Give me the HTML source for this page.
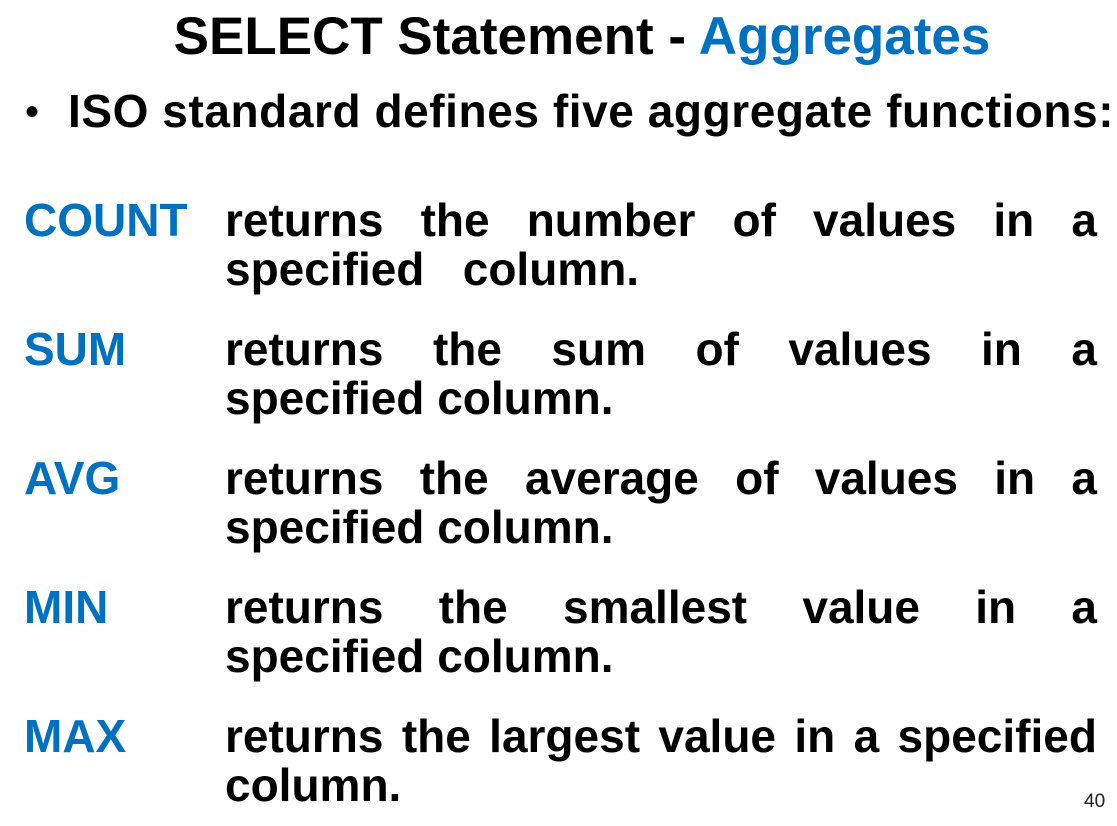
<!DOCTYPE html>
<html><head><meta charset="utf-8"><style>
html,body{margin:0;padding:0;background:#fff;}
body{width:1117px;height:826px;position:relative;overflow:hidden;font-family:"Liberation Sans",Arial,sans-serif;font-weight:bold;color:#000;}
.l{position:absolute;line-height:1;white-space:nowrap;font-size:46px;}
.b{color:#0070c0;}
.j{position:absolute;left:225px;width:872px;display:flex;justify-content:space-between;line-height:1;font-size:46px;white-space:nowrap;}
</style></head><body>
<div class="l" style="left:0;width:1164px;text-align:center;top:10px;font-size:53px;">SELECT Statement - <span class="b">Aggregates</span></div>
<div class="l" style="left:25px;top:92px;font-size:40px;font-weight:normal;">•</div>
<div class="l" style="left:68px;top:88px;letter-spacing:0.57px;">ISO standard defines five aggregate functions:</div>

<div class="l b" style="left:24px;top:197px;">COUNT</div>
<div class="j" style="top:197px;"><span>returns</span><span>the</span><span>number</span><span>of</span><span>values</span><span>in</span><span>a</span></div>
<div class="l" style="left:225px;top:246px;">specified&nbsp;&nbsp; column.</div>

<div class="l b" style="left:24px;top:326px;">SUM</div>
<div class="j" style="top:326px;"><span>returns</span><span>the</span><span>sum</span><span>of</span><span>values</span><span>in</span><span>a</span></div>
<div class="l" style="left:225px;top:375px;">specified column.</div>

<div class="l b" style="left:24px;top:455px;">AVG</div>
<div class="j" style="top:455px;"><span>returns</span><span>the</span><span>average</span><span>of</span><span>values</span><span>in</span><span>a</span></div>
<div class="l" style="left:225px;top:504px;">specified column.</div>

<div class="l b" style="left:24px;top:584px;">MIN</div>
<div class="j" style="top:584px;"><span>returns</span><span>the</span><span>smallest</span><span>value</span><span>in</span><span>a</span></div>
<div class="l" style="left:225px;top:633px;">specified column.</div>

<div class="l b" style="left:24px;top:713px;">MAX</div>
<div class="j" style="top:713px;"><span>returns</span><span>the</span><span>largest</span><span>value</span><span>in</span><span>a</span><span>specified</span></div>
<div class="l" style="left:225px;top:762px;">column.</div>

<div class="l" style="left:1084px;top:792px;font-size:19px;font-weight:normal;color:#222;">40</div>
</body></html>
